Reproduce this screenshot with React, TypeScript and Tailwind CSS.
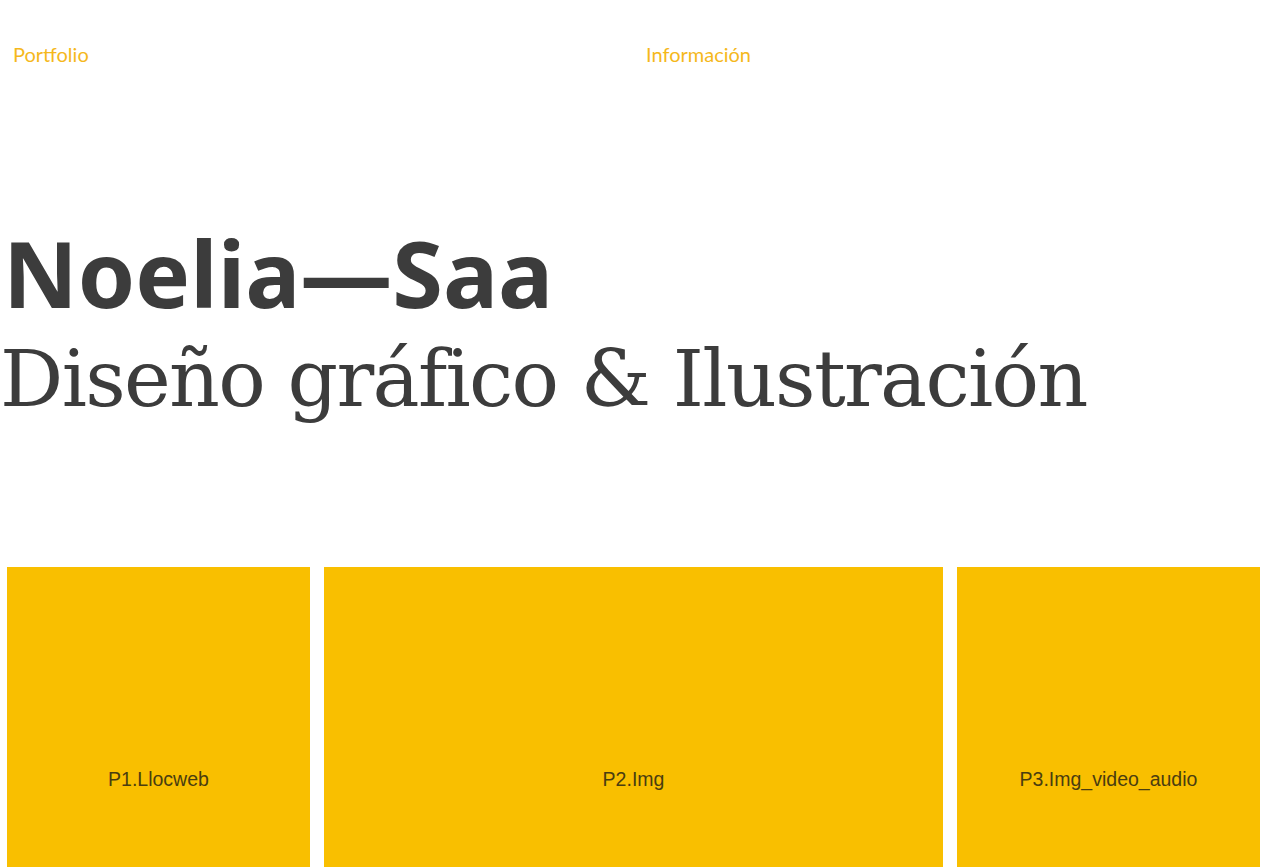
export default function App() {
  const projects = [
    { name: "P1.Llocweb", w: "w-[303px]" },
    { name: "P2.Img", w: "w-[619px]" },
    { name: "P3.Img_video_audio", w: "w-[303px]" },
  ]

  return (
    <div className="min-h-screen bg-white overflow-hidden">
      <nav className="grid grid-cols-2 pt-[40px] text-[20px] leading-[28px] text-[#f5b81c] font-['Lato','Open_Sans',sans-serif]">
        <a className="pl-[13px]">Portfolio</a>
        <a className="pl-[13px]">Información</a>
      </nav>

      <header className="mt-[155px] text-[#3c3c3c]">
        <h1 className="font-['Noto_Sans',sans-serif] font-bold text-[92px] leading-[100px] pl-[3px]">
          Noelia—Saa
        </h1>
        <h2 className="font-['DejaVu_Serif',serif] font-light text-[79px] leading-[100px] tracking-[-1.7px] pt-[6px]">
          Diseño gráfico &amp; Ilustración
        </h2>
      </header>

      <section className="flex gap-[14px] pl-[7px] mt-[138px]">
        {projects.map((p) => (
          <div
            key={p.name}
            className={`${p.w} h-[426px] bg-[#f9bf00] flex items-center justify-center text-[19.5px] text-[#4a3d10] font-['Liberation_Sans',Arial,sans-serif]`}
          >
            {p.name}
          </div>
        ))}
      </section>
    </div>
  )
}
